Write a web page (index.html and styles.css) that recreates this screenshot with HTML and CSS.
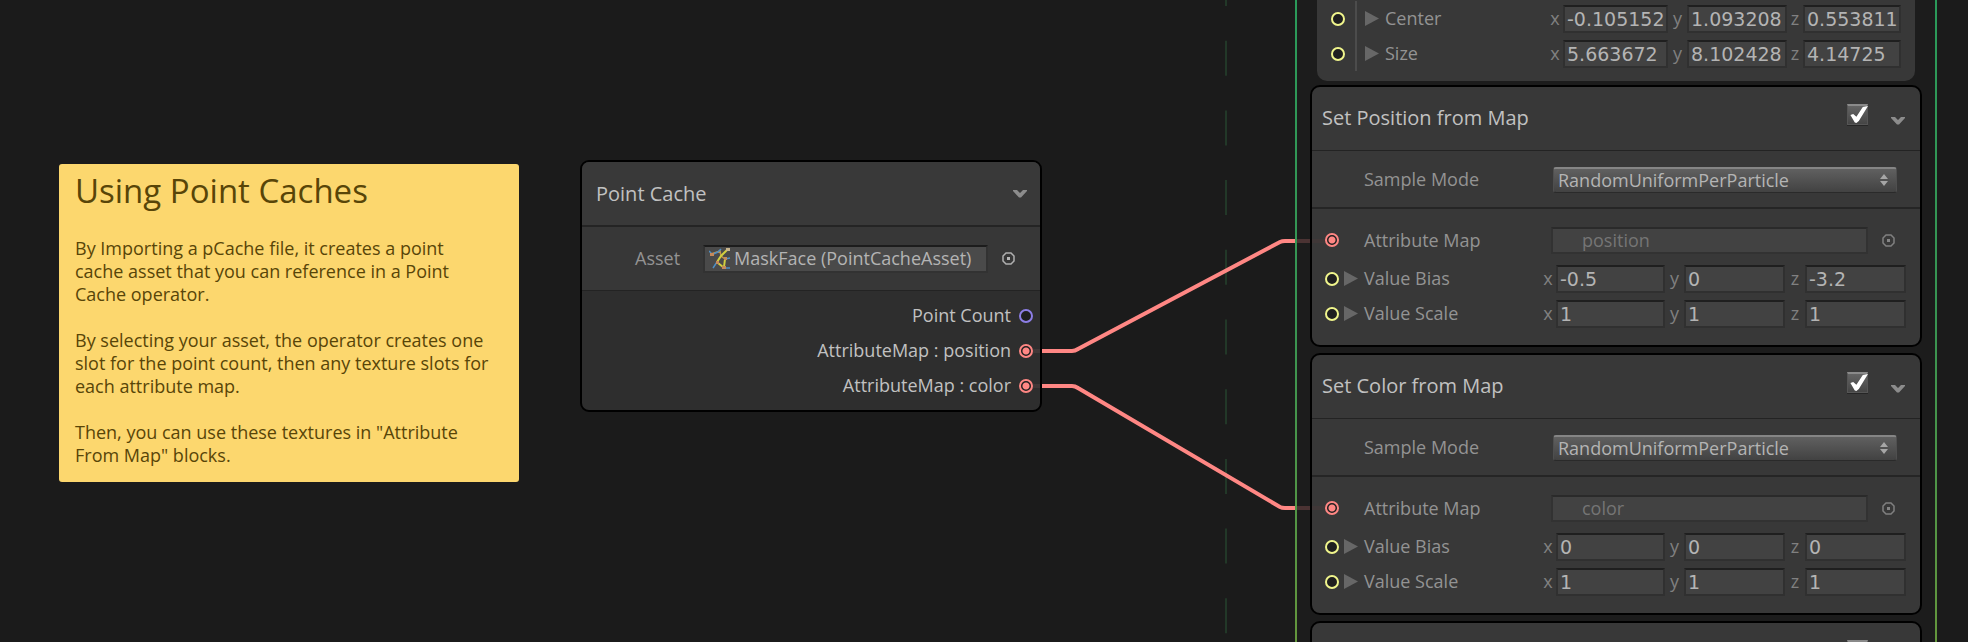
FILE: index.html
```html
<!DOCTYPE html>
<html lang="en">
<head>
<meta charset="utf-8">
<title>VFX Graph</title>
<link rel="stylesheet" href="styles.css">
</head>
<body>
<main class="graph">
  <svg class="edges" aria-hidden="true">
    <line class="guide" x1="1226" y1="-29" x2="1226" y2="642"/>
  </svg>

  <article class="note">
    <h1>Using Point Caches</h1>
    <p>By Importing a pCache file, it creates a point cache asset that you can reference in a Point Cache operator.</p>
    <p>By selecting your asset, the operator creates one slot for the point count, then any texture slots for each attribute map.</p>
    <p>Then, you can use these textures in "Attribute From Map" blocks.</p>
  </article>

  <section class="node">
    <header class="node-head">
      <h2>Point Cache</h2>
      <button class="icon-btn" aria-label="Collapse Point Cache"><svg class="chevron" viewBox="0 0 14 8"><path d="M0 0h4l3 3 3-3h4v1L8 7.500H6L0 1z"/></svg></button>
    </header>
    <div class="asset-row">
      <label for="asset">Asset</label>
      <div class="asset-field">
        <svg viewBox="0 0 22 22"><g fill="none" stroke-width="1.500"><path stroke="#c2924c" d="M2 6l9-3 1 5 4 3"/><path stroke="#d2cf3e" d="M18 2l-6 6-4 6M16 11l-1 8M9 15l5 4" stroke-width="2"/><path stroke="#4f8fc4" d="M0 3l3 3M9 4l3-3M8 14l-4 6M16 11l5-1M14 20h7M2 7l7-3"/></g><path fill="#c9b58d" d="M17 0h4v3h-4z"/><path fill="#c58a5c" d="M1 5h4v3H1zM7 13h3v3H7zM13 18h4v3h-4zM15 9h3v3h-3z"/></svg>
        <input id="asset" type="text" value="MaskFace (PointCacheAsset)" readonly>
      </div>
      <button class="icon-btn" aria-label="Pick asset"><svg class="picker" viewBox="0 0 13 13"><path d="M4 1h5l3 3v5l-3 3H4L1 9V4z"/><path class="dot" d="M5 5h3v3H5z"/></svg></button>
    </div>
    <ul class="outputs">
      <li>Point Count<i class="port port-int"></i></li>
      <li>AttributeMap : position<i class="port port-tex"></i></li>
      <li>AttributeMap : color<i class="port port-tex"></i></li>
    </ul>
  </section>

  <section class="context">
    <div class="block block-plain">
      <div class="sub-slots">
        <div class="slot">
          <i class="port port-vec"></i><i class="arrow"></i><span class="name">Center</span>
          <div class="vector">
            <label for="cx">x</label><input id="cx" value="-0.105152">
            <label for="cy">y</label><input id="cy" value="1.093208">
            <label for="cz">z</label><input id="cz" value="0.553811">
          </div>
        </div>
        <div class="slot">
          <i class="port port-vec"></i><i class="arrow"></i><span class="name">Size</span>
          <div class="vector">
            <label for="sx">x</label><input id="sx" value="5.663672">
            <label for="sy">y</label><input id="sy" value="8.102428">
            <label for="sz">z</label><input id="sz" value="4.14725">
          </div>
        </div>
      </div>
    </div>

    <section class="block">
      <header class="block-head">
        <h2>Set Position from Map</h2>
        <input class="check" type="checkbox" checked aria-label="Enable Set Position from Map">
        <button class="icon-btn" aria-label="Collapse Set Position from Map"><svg class="chevron" viewBox="0 0 14 8"><path d="M0 0h4l3 3 3-3h4v1L8 7.500H6L0 1z"/></svg></button>
      </header>
      <div class="mode-row">
        <label for="mode1">Sample Mode</label>
        <div class="select"><select id="mode1"><option>RandomUniformPerParticle</option></select><svg viewBox="0 0 8 12"><path d="M4 0l4 5H0zM4 12L0 7h8z"/></svg></div>
      </div>
      <div class="slots">
        <div class="slot slot-map">
          <i class="port port-tex"></i><label class="name" for="map1">Attribute Map</label>
          <input class="map" id="map1" value="position" disabled>
          <button class="icon-btn dim" aria-label="Pick map"><svg class="picker" viewBox="0 0 13 13"><path d="M4 1h5l3 3v5l-3 3H4L1 9V4z"/><path class="dot" d="M5 5h3v3H5z"/></svg></button>
        </div>
        <div class="slot">
          <i class="port port-vec"></i><i class="arrow"></i><span class="name">Value Bias</span>
          <div class="vector">
            <label for="b1x">x</label><input id="b1x" value="-0.5">
            <label for="b1y">y</label><input id="b1y" value="0">
            <label for="b1z">z</label><input id="b1z" value="-3.2">
          </div>
        </div>
        <div class="slot">
          <i class="port port-vec"></i><i class="arrow"></i><span class="name">Value Scale</span>
          <div class="vector">
            <label for="s1x">x</label><input id="s1x" value="1">
            <label for="s1y">y</label><input id="s1y" value="1">
            <label for="s1z">z</label><input id="s1z" value="1">
          </div>
        </div>
      </div>
    </section>

    <section class="block">
      <header class="block-head">
        <h2>Set Color from Map</h2>
        <input class="check" type="checkbox" checked aria-label="Enable Set Color from Map">
        <button class="icon-btn" aria-label="Collapse Set Color from Map"><svg class="chevron" viewBox="0 0 14 8"><path d="M0 0h4l3 3 3-3h4v1L8 7.500H6L0 1z"/></svg></button>
      </header>
      <div class="mode-row">
        <label for="mode2">Sample Mode</label>
        <div class="select"><select id="mode2"><option>RandomUniformPerParticle</option></select><svg viewBox="0 0 8 12"><path d="M4 0l4 5H0zM4 12L0 7h8z"/></svg></div>
      </div>
      <div class="slots">
        <div class="slot slot-map">
          <i class="port port-tex"></i><label class="name" for="map2">Attribute Map</label>
          <input class="map" id="map2" value="color" disabled>
          <button class="icon-btn dim" aria-label="Pick map"><svg class="picker" viewBox="0 0 13 13"><path d="M4 1h5l3 3v5l-3 3H4L1 9V4z"/><path class="dot" d="M5 5h3v3H5z"/></svg></button>
        </div>
        <div class="slot">
          <i class="port port-vec"></i><i class="arrow"></i><span class="name">Value Bias</span>
          <div class="vector">
            <label for="b2x">x</label><input id="b2x" value="0">
            <label for="b2y">y</label><input id="b2y" value="0">
            <label for="b2z">z</label><input id="b2z" value="0">
          </div>
        </div>
        <div class="slot">
          <i class="port port-vec"></i><i class="arrow"></i><span class="name">Value Scale</span>
          <div class="vector">
            <label for="s2x">x</label><input id="s2x" value="1">
            <label for="s2y">y</label><input id="s2y" value="1">
            <label for="s2z">z</label><input id="s2z" value="1">
          </div>
        </div>
      </div>
    </section>

    <section class="block">
      <header class="block-head">
        <input class="check" type="checkbox" checked aria-label="Enable block">
        <button class="icon-btn" aria-label="Collapse block"><svg class="chevron" viewBox="0 0 14 8"><path d="M0 0h4l3 3 3-3h4v1L8 7.500H6L0 1z"/></svg></button>
      </header>
    </section>
  </section>

  <svg class="edges" aria-hidden="true">
    <path class="edge" d="M1042 351H1072Q1075 351 1078 349L1280 242Q1282 241 1285 241H1295"/>
    <path class="edge" d="M1042 386H1072Q1075 386 1078 388L1280 507Q1282 508 1285 508H1295"/>
    <path class="edge edge-faint" d="M1297 241H1310M1297 508H1310"/>
    <path class="edge edge-trace" d="M1312 241H1325M1312 508H1325M1033 351H1040M1033 386H1040"/>
  </svg>
</main>
</body>
</html>
```

FILE: styles.css
```css
* { box-sizing: border-box; }

body {
  margin: 0;
  background: #1b1b1b;
  color: #c1c1c1;
  font: 18px/23px "Open Sans", "Noto Sans", sans-serif;
}

h1, h2, p, ul { margin: 0; padding: 0; font-weight: 400; }
h2 { font-size: 20px; line-height: 24px; }
input, select, button { font: inherit; color: inherit; margin: 0; border-radius: 0; }

.graph {
  position: relative;
  height: 100vh;
  overflow: hidden;
}

.edges {
  position: absolute;
  inset: 0;
  width: 100%;
  height: 100%;
  pointer-events: none;
}
.guide { stroke: #223828; stroke-width: 2; stroke-dasharray: 35 34.7; }
.edge { fill: none; stroke: #ff8784; stroke-width: 4; }
.edge-faint { stroke: #4b3333; }
.edge-trace { stroke: #403838; }

/* Sticky note */
.note {
  position: absolute;
  left: 59px;
  top: 164px;
  width: 460px;
  padding: 3px 26px 15px 16px;
  border-radius: 3px;
  background: #fcd76e;
  color: #584508;
}
.note h1 { font-size: 33px; line-height: 48px; margin-bottom: 22px; }
.note p + p { margin-top: 23px; }

/* Operator node */
.node {
  position: absolute;
  left: 580px;
  top: 160px;
  width: 462px;
  border: 2px solid #000;
  border-radius: 9px;
  background: #2e2e2e;
  overflow: hidden;
}
.node-head {
  display: flex;
  align-items: center;
  justify-content: space-between;
  height: 65px;
  padding: 0 13px 0 14px;
  background: #393939;
  border-bottom: 2px solid #242424;
}
.asset-row {
  display: flex;
  align-items: center;
  height: 64px;
  padding-right: 25px;
  background: #373737;
  border-bottom: 1px solid #232323;
}
.asset-row label { width: 121px; padding-left: 53px; color: #939393; }
.asset-field {
  display: flex;
  align-items: center;
  flex: 1;
  height: 28px;
  padding-left: 4px;
  margin-right: 14px;
  background: #4a4a4a;
  border: 2px solid #323232;
  border-top-color: #1c1c1c;
}
.asset-field svg { width: 22px; height: 22px; flex: none; }
.asset-field input {
  flex: 1;
  min-width: 0;
  padding: 0 3px;
  border: 0;
  background: none;
  color: #b4b4b4;
}
.outputs { list-style: none; padding: 7px 7px; }
.outputs li {
  display: flex;
  align-items: center;
  justify-content: flex-end;
  gap: 8px;
  height: 35px;
}

.icon-btn {
  display: flex;
  padding: 0;
  border: 0;
  background: none;
}
.chevron { width: 14px; height: 8px; fill: #8c8c8c; }
.picker { width: 13px; height: 13px; fill: none; stroke: #b0b0b0; stroke-width: 1.5; }
.picker .dot { fill: #b8b8b8; stroke: none; }
.dim { opacity: .6; }

.port {
  flex: none;
  width: 14px;
  height: 14px;
  border: 2px solid;
  border-radius: 50%;
  background: #1f1f1f;
}
.port-int { color: #8d7ee6; }
.port-vec { color: #f0f58c; }
.port-tex {
  color: #ff8784;
  background: radial-gradient(circle, #ff8784 3px, #1f1f1f 4px);
}

/* Context column */
.context {
  position: absolute;
  left: 1295px;
  top: 0;
  width: 642px;
  display: flex;
  flex-direction: column;
  gap: 6px;
  height: 100%;
  padding: 0 13px;
  border: 2px solid;
  border-width: 0 2px;
  border-image: linear-gradient(#2a9a5a, #389452 50%, #64963c) 1;
  background: #1c1c1c;
}
.block {
  flex: none;
  border: 2px solid #000;
  border-radius: 10px;
  background: #383838;
}
.block-plain {
  margin: 0 7px -2px;
  border: 0;
  border-radius: 0 0 10px 10px;
  padding: 1px 14px 10px;
}
.block-head {
  display: flex;
  align-items: center;
  height: 64px;
  padding: 0 15px 0 10px;
  border-bottom: 1px solid #232323;
}
.block-head h2 { padding-bottom: 2px; }
.block-head .check { margin: 0 23px 8px auto; }
.block-head .icon-btn { margin-top: 5px; }

.check {
  appearance: none;
  width: 21px;
  height: 21px;
  border: 1px solid #555;
  border-top: 2px solid #8a8a8a;
  background: linear-gradient(#646464, #454545);
  box-shadow: 0 1px #262626;
}
.check::before {
  content: "";
  display: block;
  width: 20px;
  height: 18px;
  background: #fff;
  clip-path: polygon(12% 50%, 26% 44%, 42% 60%, 74% 6%, 100% 0, 54% 84%, 42% 94%, 34% 92%);
}

.mode-row {
  display: flex;
  align-items: center;
  height: 58px;
  padding: 2px 23px 0 52px;
  border-bottom: 2px solid #252525;
  color: #939393;
}
.mode-row label { width: 189px; padding-bottom: 2px; }
.select { display: flex; align-items: center; flex: 1; }
.select select {
  appearance: none;
  width: 100%;
  height: 26px;
  padding: 0 4px;
  border: 1px solid #4f4f4f;
  border-top: 2px solid #858585;
  border-bottom: 1px solid #2a2a2a;
  border-radius: 3px;
  background: linear-gradient(#606060, #424242);
  color: #b4b4b4;
  line-height: 23px;
}
.select svg { width: 8px; height: 12px; margin-left: -17px; margin-right: 9px; fill: #a6a6a6; }

.slots { padding: 13px 14px 14px 13px; }
.slot {
  display: flex;
  align-items: center;
  height: 35px;
  color: #939393;
}
.slot .name { width: 176px; }
.arrow {
  flex: none;
  width: 14px;
  height: 15px;
  margin: 0 6px 0 5px;
  background: #676767;
  clip-path: polygon(0 0, 100% 50%, 0 100%);
}
.slot-map { height: 36px; margin-bottom: 3px; padding-right: 11px; }
.slot-map .name { width: 200px; padding-left: 25px; }
.map {
  flex: 1;
  min-width: 0;
  height: 27px;
  margin: 0 14px 0 12px;
  padding: 0 29px;
  border: 2px solid #323232;
  border-top-color: #2a2a2a;
  background: #424242;
  color: #757575;
}

.vector {
  flex: 1;
  display: grid;
  grid-template-columns: 16px 109px 19px 101px 20px 101px;
  align-items: center;
  justify-content: end;
}
.vector label { text-align: center; color: #808080; }
.vector input {
  min-width: 0;
  height: 28px;
  padding: 0 2px;
  border: 2px solid #303030;
  border-top-color: #1f1f1f;
  background: #424242;
  color: #b4b4b4;
  font: 19px/22px "DejaVu Sans", sans-serif;
}

.sub-slots {
  background: linear-gradient(#4c4c4c, #4c4c4c) 24px 0 / 2px 100% no-repeat;
}
.sub-slots .arrow { margin-left: 20px; }
.sub-slots .name { width: 160px; }
.sub-slots .vector { grid-template-columns: 16px 105px 19px 100px 16px 98px; }
```
